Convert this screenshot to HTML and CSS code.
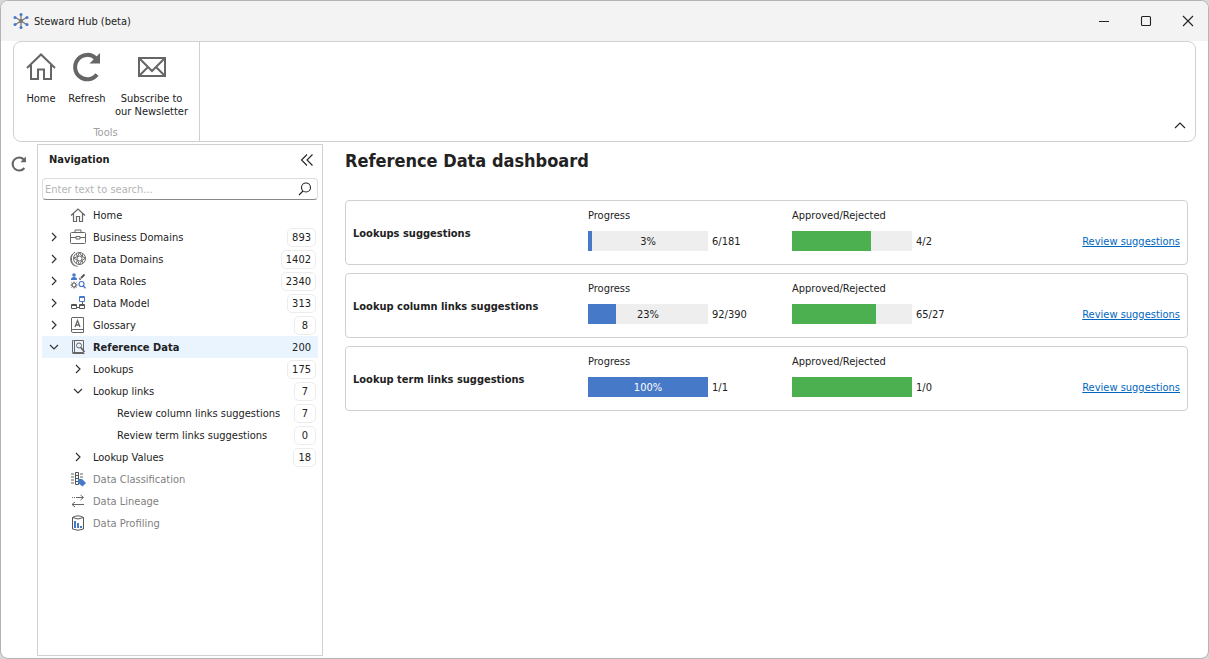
FILE: index.html
```html
<!DOCTYPE html>
<html lang="en">
<head>
<meta charset="utf-8">
<title>Steward Hub (beta)</title>
<link rel="stylesheet" href="styles.css">
</head>
<body>
<svg class="sprite" aria-hidden="true">
  <symbol id="right" viewBox="0 0 16 16"><path d="M6 4l4 4-4 4" fill="none" stroke="#333" stroke-width="1.2"/></symbol>
  <symbol id="down" viewBox="0 0 16 16"><path d="M4 6l4 4 4-4" fill="none" stroke="#333" stroke-width="1.2"/></symbol>
  <symbol id="house" viewBox="0 0 30 30"><path d="M1 16L15 2.500L29 16M5 13V27H12V17.500H18V27H25V13" fill="none" stroke="#666" stroke-width="2"/></symbol>
  <symbol id="reload" viewBox="0 0 30 30"><path d="M25 22.500A12.200 12.200 0 1 1 24 6.500" fill="none" stroke="#666" stroke-width="4"/><path d="M28 1V11.500H17.500z" fill="#666"/></symbol>
</svg>
<div class="window">
  <header class="titlebar">
    <svg class="logo" viewBox="0 0 16 16"><g stroke="#777" stroke-width="1.300"><path d="M8 2V14M2.500 4.500L13.500 11.500M2.500 11.500L13.500 4.500"/></g><circle cx="8" cy="8" r="2" fill="#777"/><g fill="#4679c8"><circle cx="8" cy="1.600" r="1.500"/><circle cx="8" cy="14.400" r="1.500"/><circle cx="2" cy="4.500" r="1.500"/><circle cx="14" cy="4.500" r="1.500"/><circle cx="2" cy="11.500" r="1.500"/><circle cx="14" cy="11.500" r="1.500"/></g></svg>
    <span class="app-name">Steward Hub (beta)</span>
    <div class="win-buttons">
      <button class="win-button" aria-label="Minimize"><svg viewBox="0 0 12 12"><path d="M1 6.500H11"/></svg></button>
      <button class="win-button" aria-label="Maximize"><svg viewBox="0 0 12 12"><rect x="1.500" y="1.500" width="9" height="9" rx="1"/></svg></button>
      <button class="win-button" aria-label="Close"><svg viewBox="0 0 12 12"><path d="M1 1L11 11M11 1L1 11"/></svg></button>
    </div>
  </header>

  <section class="ribbon">
    <div class="group">
      <div class="tools">
        <button class="tool tool-home"><svg><use href="#house"/></svg>Home</button>
        <button class="tool tool-refresh"><svg><use href="#reload"/></svg>Refresh</button>
        <button class="tool tool-mail"><svg viewBox="0 0 30 30"><path d="M2 6H28V24H2zM2.500 6.500L15 19L27.500 6.500M2.500 23.500L11 15M27.500 23.500L19 15" fill="none" stroke="#666" stroke-width="2"/></svg>Subscribe to<br>our Newsletter</button>
      </div>
      <div class="group-name">Tools</div>
    </div>
    <button class="fold" aria-label="Collapse ribbon"><svg viewBox="0 0 12 12"><path d="M1 9L6 4L11 9"/></svg></button>
  </section>

  <div class="body">
    <aside class="rail"><button class="rail-button" aria-label="Refresh view"><svg><use href="#reload"/></svg></button></aside>
    <nav class="panel" aria-label="Navigation">
      <div class="panel-head">
        <h2>Navigation</h2>
        <button class="collapse" aria-label="Collapse navigation"><svg viewBox="0 0 14 14"><path d="M7 1.500L1.500 7L7 12.500M12.500 1.500L7 7L12.500 12.500"/></svg></button>
      </div>
      <div class="search">
        <input type="text" aria-label="Search navigation" placeholder="Enter text to search...">
        <svg viewBox="0 0 14 14"><circle cx="8" cy="5.500" r="4.500"/><path d="M5 9L1 13"/></svg>
      </div>
      <ul class="tree">
        <li class="row"><span class="slot"></span><span class="slot"><svg viewBox="0 0 16 16" fill="none" stroke="#666" stroke-width="1.200"><path d="M1 8.500L8 2L15 8.500M3.500 6.500V14.500H6.500V9.500H9.500V14.500H12.500V6.500"/></svg></span><a href="#">Home</a></li>
        <li class="row"><button class="slot" aria-label="Expand"><svg><use href="#right"/></svg></button><span class="slot"><svg viewBox="0 0 16 16" fill="none" stroke="#666"><rect x=".5" y="3.500" width="15" height="11" rx="1"/><path d="M5 3.500V1H11V3.500M.5 8.500H6M10 8.500H15.500M6 7.500H10V10H6z"/></svg></span><a href="#">Business Domains</a><span class="count">893</span></li>
        <li class="row"><button class="slot" aria-label="Expand"><svg><use href="#right"/></svg></button><span class="slot"><svg viewBox="0 0 16 16" fill="none" stroke="#666"><circle cx="9.500" cy="7.500" r="6"/><circle cx="9.500" cy="7.500" r="2.500"/><path d="M9.500 1.500L7.500 5.500L3.800 7L7.500 9.500L9.500 13.500L12 9.500L15.500 7L12 5.500zM6 3L7.500 5.500M13 3L12 5.500M6 12L7.500 9.500M13 12L12 9.500M5 1A8 8 0 0 0 7.500 15.500M2.500 3A8 8 0 0 0 4.500 15"/></svg></span><a href="#">Data Domains</a><span class="count">1402</span></li>
        <li class="row"><button class="slot" aria-label="Expand"><svg><use href="#right"/></svg></button><span class="slot"><svg viewBox="0 0 16 16" fill="none"><circle cx="4" cy="2" r="1.800" fill="#4679c8"/><path d="M1 7V5.500L3 4H5L7 5.500V7z" fill="#4679c8"/><path d="M9.500 6.500L10.500 5.500M11 5L14.500 1.500" stroke="#555" stroke-width="1.800"/><circle cx="4" cy="12" r="2" stroke="#666" stroke-width="1.200"/><path d="M4 8.500V10M4 14V15.500M.5 12H2M6 12H7.500M1.500 9.500L2.500 10.500M5.500 13.500L6.500 14.500M6.500 9.500L5.500 10.500M2.500 13.500L1.500 14.500" stroke="#666"/><circle cx="11.500" cy="11" r="2.500" stroke="#4679c8" stroke-width="1.200"/><path d="M13.300 13L15.500 15.300" stroke="#4679c8" stroke-width="1.500"/></svg></span><a href="#">Data Roles</a><span class="count">2340</span></li>
        <li class="row"><button class="slot" aria-label="Expand"><svg><use href="#right"/></svg></button><span class="slot"><svg viewBox="0 0 16 16" fill="none"><path d="M9.500 1.500H14.500V6.500H9.500zM9.500 2.500H14.500" stroke="#4679c8"/><path d="M1.500 9.500H6.500V13.500H1.500zM9.500 9.500H14.500V13.500H9.500zM1.500 10.500H6.500M9.500 10.500H14.500M6.500 12.500H9.500M12.500 7V9.500" stroke="#555"/></svg></span><a href="#">Data Model</a><span class="count">313</span></li>
        <li class="row"><button class="slot" aria-label="Expand"><svg><use href="#right"/></svg></button><span class="slot"><svg viewBox="0 0 16 16" fill="none" stroke="#666"><path d="M2 .5H13.500V15.500H2.500Q1.500 15.500 1.500 14V1zM1.500 13.500Q2 12.500 3 12.500H13.500"/><path d="M5 10L7.500 3.500L10 10M6 8H9" stroke-width="1.300"/></svg></span><a href="#">Glossary</a><span class="count">8</span></li>
        <li>
          <div class="row selected"><button class="slot" aria-label="Collapse"><svg><use href="#down"/></svg></button><span class="slot"><svg viewBox="0 0 16 16" fill="none" stroke="#666"><path d="M3.500 1.500H13.500V13.500H2.500V1.500zM4.500 1.500V13.500M2.500 14.500H14.500"/><circle cx="9" cy="6.500" r="2.500"/><path d="M10.800 8.500L14.500 13" stroke-width="1.800"/></svg></span><a href="#">Reference Data</a><span class="count">200</span></div>
          <ul class="branch">
            <li class="row"><button class="slot" aria-label="Expand"><svg><use href="#right"/></svg></button><a href="#">Lookups</a><span class="count">175</span></li>
            <li>
              <div class="row"><button class="slot" aria-label="Collapse"><svg><use href="#down"/></svg></button><a href="#">Lookup links</a><span class="count">7</span></div>
              <ul class="branch">
                <li class="row"><span class="slot"></span><a href="#">Review column links suggestions</a><span class="count">7</span></li>
                <li class="row"><span class="slot"></span><a href="#">Review term links suggestions</a><span class="count">0</span></li>
              </ul>
            </li>
            <li class="row"><button class="slot" aria-label="Expand"><svg><use href="#right"/></svg></button><a href="#">Lookup Values</a><span class="count">18</span></li>
          </ul>
        </li>
        <li class="row muted"><span class="slot"></span><span class="slot"><svg viewBox="0 0 16 16" fill="none"><path d="M1 2H4V4H1zM1 5H4V7H1zM1 8H4V10H1zM1 11H4V13H1zM10 2H13V4H10zM10 5H13V7H10z" fill="#b0b0b0"/><path d="M5.500 1.500H8.500V13.500H5.500zM5.500 4.500H8.500M5.500 7.500H8.500M5.500 10.500H8.500" stroke="#555"/><path d="M8 8H12L16 12L12.500 15.500L8 12z" fill="#4679c8"/></svg></span><a href="#">Data Classification</a></li>
        <li class="row muted"><span class="slot"></span><span class="slot"><svg viewBox="0 0 16 16" fill="none" stroke="#666"><path d="M2 4.500H6" stroke-dasharray="1 1"/><path d="M6 4.500H13M10.500 2L13.500 4.500L10.500 7M2 11.500H14M5 9L2 11.500L5 14"/></svg></span><a href="#">Data Lineage</a></li>
        <li class="row muted"><span class="slot"></span><span class="slot"><svg viewBox="0 0 16 16" fill="none" stroke="#555"><path d="M2.500 2.500V14Q8 16.500 13.500 14V2.500M2.500 2.500Q8 -.8 13.500 2.500Q8 5.500 2.500 2.500z"/><path d="M5 6V13M8 8V13M11 11V13" stroke="#4679c8" stroke-width="2"/></svg></span><a href="#">Data Profiling</a></li>
      </ul>
    </nav>

    <main class="dashboard">
      <h1>Reference Data dashboard</h1>
      <article class="card">
        <h3>Lookups suggestions</h3>
        <div class="metric"><span>Progress</span><div class="measure"><div class="bar"><div class="fill blue" style="width:3%"></div><span class="percent">3%</span></div><span>6/181</span></div></div>
        <div class="metric"><span>Approved/Rejected</span><div class="measure"><div class="bar"><div class="fill green" style="width:66%"></div></div><span>4/2</span></div></div>
        <a class="review" href="#">Review suggestions</a>
      </article>
      <article class="card">
        <h3>Lookup column links suggestions</h3>
        <div class="metric"><span>Progress</span><div class="measure"><div class="bar"><div class="fill blue" style="width:23%"></div><span class="percent">23%</span></div><span>92/390</span></div></div>
        <div class="metric"><span>Approved/Rejected</span><div class="measure"><div class="bar"><div class="fill green" style="width:70%"></div></div><span>65/27</span></div></div>
        <a class="review" href="#">Review suggestions</a>
      </article>
      <article class="card">
        <h3>Lookup term links suggestions</h3>
        <div class="metric"><span>Progress</span><div class="measure"><div class="bar"><div class="fill blue" style="width:100%"></div><span class="percent light">100%</span></div><span>1/1</span></div></div>
        <div class="metric"><span>Approved/Rejected</span><div class="measure"><div class="bar"><div class="fill green" style="width:100%"></div></div><span>1/0</span></div></div>
        <a class="review" href="#">Review suggestions</a>
      </article>
    </main>
  </div>
</div>
</body>
</html>
```
FILE: styles.css
```css
* { box-sizing: border-box; }
body {
  margin: 0;
  background: #d8d8dc;
  color: #222;
  font: 11px/13px Tahoma, "DejaVu Sans Condensed", "Noto Sans", sans-serif;
}
button { padding: 0; border: 0; background: none; color: inherit; font: inherit; }
ul { margin: 0; padding: 0; list-style: none; }
h1, h2, h3 { margin: 0; }
svg { display: block; flex: none; }
.sprite { position: absolute; width: 0; height: 0; }
.window {
  display: flex;
  flex-direction: column;
  min-height: 100vh;
  border: 1px solid #b4b4b8;
  border-radius: 8px;
  background: #fff;
  overflow: hidden;
}
.titlebar {
  display: flex;
  align-items: center;
  height: 40px;
  padding-left: 12px;
  background: #f3f3f3;
}
.logo { width: 16px; height: 16px; }
.app-name { flex: 1; margin-left: 5px; }
.win-buttons { display: flex; gap: 2px; }
.win-button { display: flex; align-items: center; justify-content: center; width: 40px; height: 40px; }
.win-button svg { width: 12px; height: 12px; }
.win-button svg, .fold svg, .collapse svg, .search svg { fill: none; stroke: #222; stroke-width: 1.1; }

.ribbon {
  display: flex;
  align-items: flex-end;
  justify-content: space-between;
  margin: 0 12px;
  border: 1px solid #d0d0d0;
  border-radius: 8px;
}
.group { padding: 10px 7px 2px 5px; border-right: 1px solid #d0d0d0; }
.tools { display: flex; align-items: flex-start; gap: 1px; }
.tool { display: flex; flex-direction: column; align-items: center; white-space: nowrap; }
.tool svg { width: 30px; height: 30px; margin-bottom: 10px; }
.tool-home { width: 44px; }
.tool-refresh { width: 46px; }
.tool-mail { width: 81px; }
.group-name { margin-top: 8px; color: #a0a0a0; text-align: center; }
.fold { margin: 0 9px 10px; }
.fold svg { width: 12px; height: 12px; }

.body { display: flex; flex: 1; padding: 2px 20px 2px 0; }
.rail { display: flex; flex-direction: column; align-items: center; width: 36px; padding-top: 12px; }
.rail-button svg { width: 16px; height: 16px; }
.panel { width: 286px; padding: 0 4px; border: 1px solid #d0d0d0; }
.panel-head { display: flex; align-items: center; justify-content: space-between; height: 29px; padding: 0 4px 0 7px; }
.panel-head h2 { font-size: 11px; }
.collapse svg { width: 14px; height: 14px; }
.search {
  display: flex;
  align-items: center;
  height: 22px;
  margin: 4px 0;
  padding: 0 5px 0 2px;
  border: 1px solid #ddd;
  border-bottom-color: #888;
  border-radius: 4px;
}
.search input { flex: 1; min-width: 0; padding: 0; border: 0; outline: 0; background: none; font: inherit; }
.search input::placeholder { color: #b4b4b4; }
.search svg { width: 14px; height: 14px; }
.row { display: flex; align-items: center; height: 22px; padding-right: 2px; }
.row a { flex: 1; margin-left: 3px; color: inherit; text-decoration: none; white-space: nowrap; }
.slot { display: flex; align-items: center; justify-content: center; flex: none; width: 24px; height: 22px; }
.slot svg { width: 16px; height: 16px; }
.branch { padding-left: 24px; }
.count { padding: 2px 4px; min-width: 22px; border: 1px solid #ececec; border-radius: 5px; text-align: center; }
.selected { background: #e9f4fe; }
.selected a { font-weight: bold; }
.selected .count { border-color: #e9f4fe; }
.muted { color: #808080; }

.dashboard { display: flex; flex: 1; flex-direction: column; gap: 8px; padding-left: 22px; }
.dashboard h1 { margin: 6px 0 20px; font-size: 18px; line-height: 22px; }
.card {
  display: grid;
  grid-template-columns: 235px 204px 1fr auto;
  align-items: center;
  height: 65px;
  padding: 0 7px;
  border: 1px solid #d0d0d0;
  border-radius: 4px;
}
.card h3 { padding-top: 2px; font-size: 11px; }
.metric { display: grid; gap: 9px; padding-bottom: 5px; }
.measure { display: flex; align-items: center; gap: 4px; }
.bar { display: grid; width: 120px; height: 20px; background: #eee; }
.fill, .percent { grid-area: 1 / 1; }
.percent { place-self: center; }
.light { color: #fff; }
.blue { background: #4679c8; }
.green { background: #4cb050; }
.review { margin-top: 18px; color: #0067c0; }
```
